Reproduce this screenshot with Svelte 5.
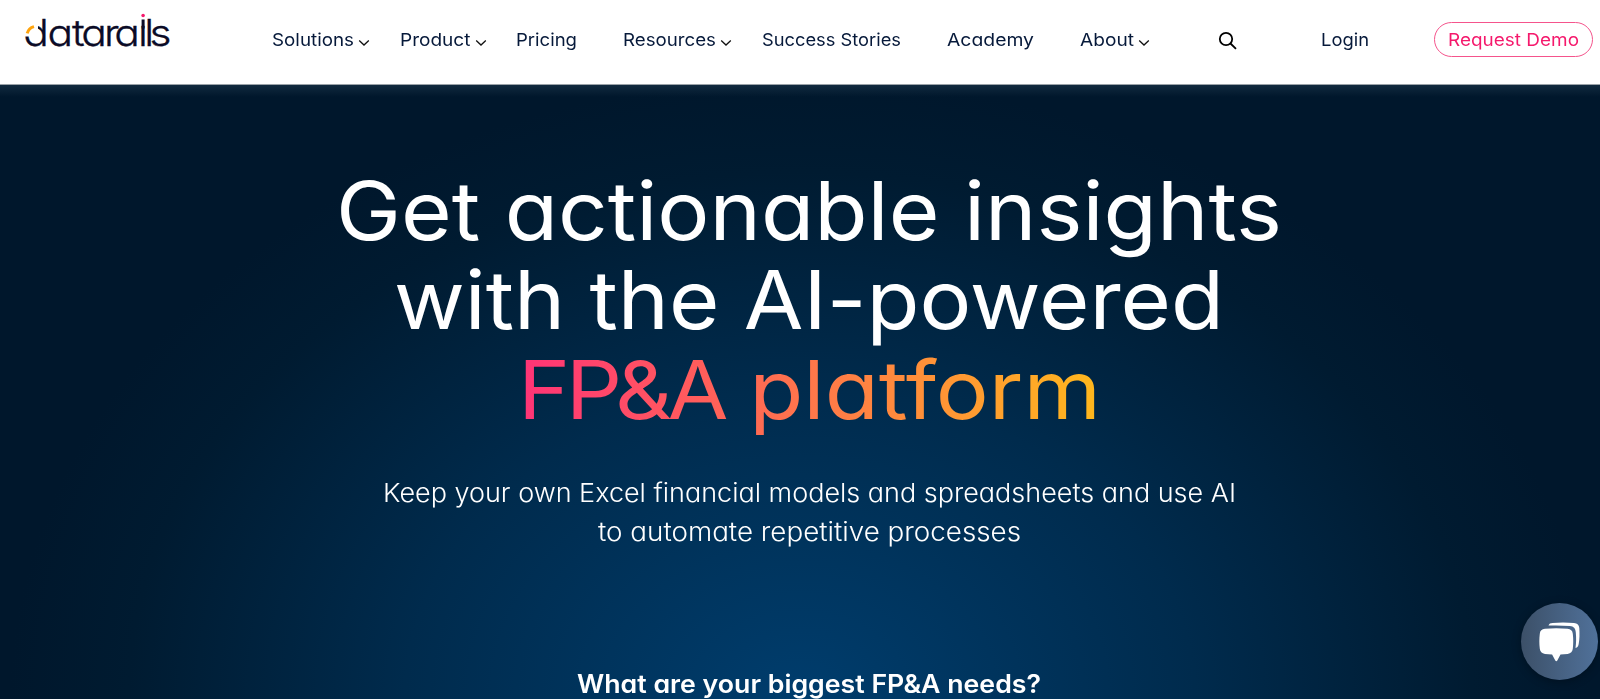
<script lang="ts">
  type NavItem = {
    label: string;
    width: number;
    menu?: boolean;
  };

  const items: NavItem[] = [
    { label: "Solutions", width: 82, menu: true },
    { label: "Product", width: 70.5, menu: true },
    { label: "Pricing", width: 61 },
    { label: "Resources", width: 93, menu: true },
    { label: "Success Stories", width: 139 },
    { label: "Academy", width: 87 },
    { label: "About", width: 54, menu: true },
  ];

  // Stretches the text sideways until the line has the given width.
  const fit = (node: HTMLElement, width: number) => {
    const natural = node.getBoundingClientRect().width;
    node.style.transform = `scaleX(${width / natural})`;
    node.style.marginRight = `${width - natural}px`;
  };
</script>

<header class="header">
  <a class="logo" href="#home" aria-label="datarails">
    <svg width="150" height="40" viewBox="22 10 150 40">
      <text
        class="wordmark"
        transform="translate(22 0) scale(1.15 1)"
        x="1.2 22.1 43.5 51.6 71.3 80.3 100.8 106.4 110.8"
        y="46">datarails</text>
      <rect x="139" y="10" width="8" height="14" fill="#fff" />
      <rect x="141.6" y="19.5" width="3" height="9" fill="#0b0b26" />
      <rect x="24" y="16" width="14" height="20.500" fill="#fff" />
      <path d="M27.200 33.400A9.600 9.600 0 0 1 34 26.600" fill="none" stroke="#ffa40d" stroke-width="3" />
      <circle cx="143.1" cy="15.5" r="1.8" fill="#f5196c" />
    </svg>
  </a>

  <nav class="nav">
    {#each items as item}
      <a class="nav-item" href="#{item.label}">
        <span use:fit={item.width}>{item.label}</span>
        {#if item.menu}
          <svg class="chevron" width="12" height="8" viewBox="0 0 12 8">
            <path d="M1.200 1.500 6 6l4.800-4.500" />
          </svg>
        {/if}
      </a>
    {/each}
  </nav>

  <button class="search" aria-label="Search">
    <svg width="20" height="20" viewBox="0 0 20 20">
      <circle cx="8" cy="8" r="6.2" />
      <path d="m12.500 12.500 5.500 5.400" />
    </svg>
  </button>
  <a class="login" href="#login"><span use:fit={48}>Login</span></a>
  <a class="demo" href="#demo"><span use:fit={131}>Request Demo</span></a>
</header>

<main class="hero">
  <h1>
    <span class="line" use:fit={946}>Get actionable insights</span>
    <span class="line" use:fit={830}>with the AI-powered</span>
    <span class="line accent" use:fit={583}><span class="tight">FP&amp;A</span> platform</span>
  </h1>
  <p class="lead">
    <span class="line" use:fit={853}>Keep your own Excel financial models and spreadsheets and use AI</span>
    <span class="line" use:fit={423}>to automate repetitive processes</span>
  </p>
  <h2><span class="line" use:fit={464}>What are your biggest FP&amp;A needs?</span></h2>
</main>

<button class="chat" aria-label="Open chat">
  <svg width="42" height="42" viewBox="0 0 42 42">
    <path d="M9.500 4.600C10 2.600 11.500 2.200 13.500 2 20 1.300 28 1.300 35 2c3.500.3 5 2 5.300 5 .4 6 .3 11-.6 16-.4 2.200-1.300 3.700-3.200 4 .8-5.500.8-10 .3-15.500-.3-4-2-6-6-6.400-7-.7-14-.8-21.300-.5z" />
    <path d="M6 7.800c7.500-.8 15-.8 22.500 0 3.300.3 4.900 1.700 5.300 5 .6 5 .6 10 0 15-.4 3.200-1.900 4.700-5.200 5.100l-7.100.5-3.200 6c-.5 1-1.500 1-2 0l-3.200-6-7.100-.5c-3.300-.4-4.800-1.900-5.200-5.100-.6-5-.6-10 0-15 .4-3.300 1.900-4.700 5.200-5z" />
  </svg>
</button>

<style>
  :global(body) {
    background: #fff;
    overflow: hidden;
  }

  .header,
  .hero {
    font-family: Inter, "Open Sans", sans-serif;
    font-feature-settings: "cv11";
    font-optical-sizing: none;
    box-sizing: border-box;
  }

  .header {
    display: flex;
    align-items: flex-start;
    height: 85px;
    padding: 10px 7px 0 22px;
    border-bottom: 1px solid #9aa2a8;
    background: #fff;
    font-size: 17.5px;
    line-height: 24px;
  }
  .header a {
    color: #06193a;
    text-decoration: none;
    white-space: nowrap;
  }

  .logo {
    width: 250px;
    height: 40px;
  }
  .logo svg {
    overflow: visible;
  }
  .wordmark {
    fill: #0b0b26;
    stroke: #0b0b26;
    stroke-width: 0.3;
    font-size: 37px;
    font-weight: 300;
  }

  .nav {
    display: grid;
    grid-template-columns: 128px 116px 107px 139px 185px 133px 137px;
    margin-top: 18px;
  }
  .nav-item {
    display: flex;
    align-items: center;
    gap: 4px;
  }
  .nav-item span,
  .login span,
  .demo span {
    display: inline-block;
    font-weight: 400;
    transform-origin: left;
  }
  .chevron {
    margin-top: 6px;
  }
  .chevron path {
    fill: none;
    stroke: #111;
    stroke-width: 1.3;
  }

  button {
    padding: 0;
    border: 0;
    background: none;
    cursor: pointer;
  }
  .search {
    width: 20px;
    height: 20px;
    margin: 21px 0 0 1px;
  }
  .search svg {
    display: block;
    fill: none;
    stroke: #000;
    stroke-width: 1.8;
  }
  .login {
    width: 113px;
    margin: 18px 0 0 83px;
  }
  .header .demo {
    display: flex;
    justify-content: center;
    box-sizing: border-box;
    flex: none;
    width: 159px;
    height: 35px;
    margin: 12px 0 0 auto;
    padding-top: 5px;
    border: 1px solid #f5548c;
    border-radius: 18px;
    color: #f5196c;
  }

  .hero {
    height: 614px;
    padding: 82px 0 0 18px;
    overflow: hidden;
    background:
      linear-gradient(rgba(60, 90, 110, 0.28), rgba(60, 90, 110, 0) 12px),
      radial-gradient(ellipse 790px 620px at 50% 100%, #003d6d, #002b4d 50%, #001b31 85%, #00172c);
    color: #fff;
    text-align: center;
  }
  .line {
    display: block;
    width: max-content;
    white-space: nowrap;
    transform-origin: left;
  }
  h1,
  h2,
  .lead {
    display: flex;
    flex-direction: column;
    align-items: center;
    margin: 0;
  }
  h1 {
    font-size: 81px;
    font-weight: 400;
    line-height: 89.33px;
  }
  .accent {
    background: linear-gradient(90deg, #ff3377, #ff704f 45%, #ffb81c);
    -webkit-background-clip: text;
    background-clip: text;
    color: transparent;
  }
  .tight {
    letter-spacing: -4px;
  }
  .lead {
    margin-top: 39px;
    font-size: 26px;
    font-weight: 300;
    line-height: 38.6px;
  }
  h2 {
    margin-top: 114px;
    font-size: 25.5px;
    font-weight: 600;
    line-height: 38.6px;
  }

  .chat {
    position: fixed;
    right: 2px;
    bottom: 20px;
    display: flex;
    align-items: center;
    justify-content: center;
    width: 77px;
    height: 77px;
    border-radius: 50%;
    background: linear-gradient(90deg, #3c5068, #50719a);
    box-shadow: 0 2px 10px rgba(0, 0, 0, 0.3);
  }
  .chat svg {
    fill: #fff;
  }
</style>
